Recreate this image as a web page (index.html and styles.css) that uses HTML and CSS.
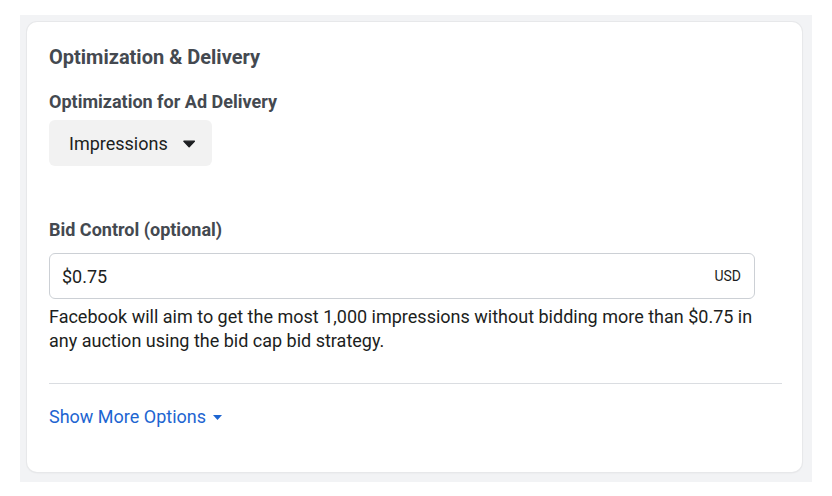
FILE: index.html
```html
<!DOCTYPE html>
<html>
<head>
<meta charset="utf-8">
<link rel="stylesheet" href="styles.css">
</head>
<body>
<div class="page">
  <div class="panel">
    <div class="card">
      <h2 class="title">Optimization &amp; Delivery</h2>
      <div class="label">Optimization for Ad Delivery</div>
      <button class="select">
        <span>Impressions</span>
        <svg class="caret" width="13" height="8" viewBox="0 0 13 8"><path d="M1 1 H12 L6.5 7 Z" fill="#1c1e21" stroke="#1c1e21" stroke-width="1.5" stroke-linejoin="round"/></svg>
      </button>
      <div class="label bid-label">Bid Control (optional)</div>
      <div class="input">
        <span class="value">$0.75</span>
        <span class="currency">USD</span>
      </div>
      <p class="desc">Facebook will aim to get the most 1,000 impressions without bidding more than $0.75 in any auction using the bid cap bid strategy.</p>
      <hr class="divider">
      <a class="more">Show More Options <svg class="more-caret" width="9" height="5" viewBox="0 0 9 5"><path d="M0 0 H9 L4.5 5 Z" fill="#1d65d1"/></svg></a>
    </div>
  </div>
</div>
</body>
</html>
```
FILE: styles.css
```css
* { box-sizing: border-box; }
html, body { margin: 0; padding: 0; background: #fff; }
body { font-family: Roboto, "Liberation Sans", Arial, sans-serif; color: #1c1e21; }
.page { padding: 15px 20px 14px 20px; }
.panel { background: #f2f3f5; padding: 7px 10px 10px 7px; }
.card {
  background: #fff;
  border-radius: 10px;
  box-shadow: 0 0 0 1px #e7e8ea, 0 1px 2px rgba(0,0,0,0.08);
  padding: 23px 20px 0 22px;
  height: 450px;
}
.title { margin: 0; font-size: 20px; font-weight: 700; color: #444950; line-height: 24px; }
.label { font-size: 18px; font-weight: 700; color: #444950; line-height: 22px; margin-top: 22px; }
.select {
  display: flex; align-items: center; gap: 15px;
  margin-top: 7px;
  height: 46px; width: 163px;
  padding: 0 17px 0 20px;
  border: none; border-radius: 6px;
  background: #f2f2f2;
  font-family: inherit; font-size: 18px; color: #1c1e21;
}
.caret { margin-top: 2px; }
.bid-label { margin-top: 53px; }
.input {
  margin-top: 12px;
  width: 706px; height: 46px;
  border: 1px solid #ccd0d5; border-radius: 6px;
  display: flex; align-items: center; justify-content: space-between;
  padding: 0 13px 0 12px;
}
.value { font-size: 18px; }
.currency { font-size: 14px; color: #1c1e21; }
.desc { margin: 6px 0 0 0; width: 720px; font-size: 18px; line-height: 24px; }
.divider { margin: 30px 0 0 0; border: none; border-top: 1px solid #dadde1; height: 0; }
.more { display: inline-flex; align-items: center; gap: 7px; margin-top: 22px; font-size: 18px; line-height: 22px; color: #1d65d1; }
```
